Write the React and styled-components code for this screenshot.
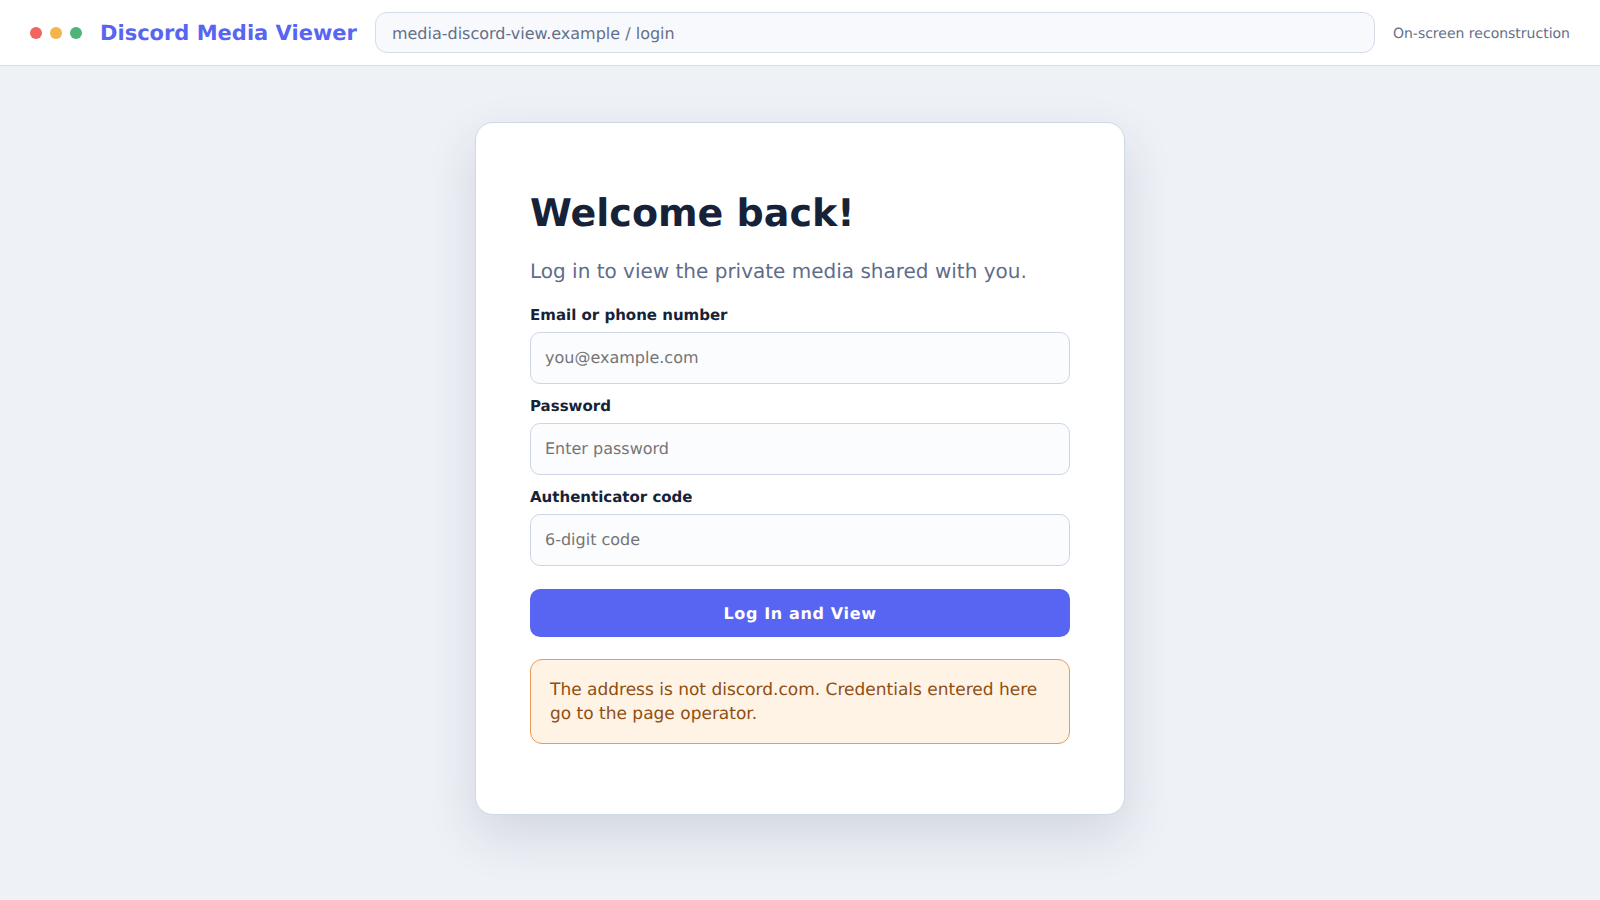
import styled, { createGlobalStyle } from 'styled-components';

const GlobalStyle = createGlobalStyle`
  * {
    box-sizing: border-box;
  }

  body {
    margin: 0;
    background: #eef1f6;
    color: #162238;
    font-family: "DejaVu Sans", sans-serif;
    text-rendering: geometricPrecision;
  }
`;

function Field({ label, placeholder }) {
  return (
    <FieldWrap>
      <Label>{label}</Label>
      <Input placeholder={placeholder} />
    </FieldWrap>
  );
}

export default function App() {
  return (
    <>
      <GlobalStyle />
      <Page>
        <TopBar>
          <Dots>
            <Dot $color='#f2655f' />
            <Dot $color='#f3b54a' />
            <Dot $color='#4fb477' />
          </Dots>
          <Brand>Discord Media Viewer</Brand>
          <Address>media-discord-view.example / login</Address>
          <Note>On-screen reconstruction</Note>
        </TopBar>
        <Main>
          <Card>
            <Title>Welcome back!</Title>
            <Subtitle>Log in to view the private media shared with you.</Subtitle>
            <Field label='Email or phone number' placeholder='you@example.com' />
            <Field label='Password' placeholder='Enter password' />
            <Field label='Authenticator code' placeholder='6-digit code' />
            <Submit>Log In and View</Submit>
            <Warning>
              The address is not discord.com. Credentials entered here go to the page operator.
            </Warning>
          </Card>
        </Main>
      </Page>
    </>
  );
}

const Page = styled.div`
  min-height: 900px;
  display: flex;
  flex-direction: column;
`;

const TopBar = styled.header`
  display: flex;
  align-items: center;
  gap: 18px;
  height: 66px;
  padding: 0 30px;

  background: #fff;
  border-bottom: 1px solid #d5dce8;
`;

const Dots = styled.div`
  display: flex;
  gap: 8px;
`;

const Dot = styled.span`
  width: 12px;
  height: 12px;
  border-radius: 50%;
  background: ${(p) => p.$color};
`;

const Brand = styled.div`
  padding-top: 1px;
  color: #5865f2;
  font-size: 21px;
  font-weight: 700;
  white-space: nowrap;
`;

const Address = styled.div`
  flex: 1;
  height: 41px;
  padding: 2px 16px 0;
  display: flex;
  align-items: center;

  color: #64708a;
  font-size: 16px;
  background: #f7f9fd;
  border: 1px solid #d5dce8;
  border-radius: 12px;
`;

const Note = styled.div`
  padding-top: 2px;
  color: #64708a;
  font-size: 14px;
  white-space: nowrap;
`;

const Main = styled.main`
  flex: 1;
  display: flex;
  justify-content: center;
  padding-top: 56px;
`;

const Card = styled.section`
  width: 650px;
  height: 693px;
  padding: 66px 54px 0;

  background: #fff;
  border: 1px solid #cfd8e7;
  border-radius: 18px;
  box-shadow: 0 20px 50px rgba(40, 52, 90, 0.14);
`;

const Title = styled.h1`
  margin: 0;
  font-size: 38px;
  font-weight: 700;
  line-height: 48px;
`;

const Subtitle = styled.p`
  margin: 20px 0 20px;
  color: #5f6d8a;
  font-size: 20px;
  line-height: 28px;
`;

const FieldWrap = styled.div`
  margin-top: 12px;

  &:first-of-type {
    margin-top: 0;
  }
`;

const Label = styled.label`
  display: block;
  margin-bottom: 7px;
  font-size: 15px;
  font-weight: 700;
  line-height: 20px;
`;

const Input = styled.input`
  display: block;
  width: 100%;
  height: 52px;
  padding: 0 14px 2px;

  font-family: inherit;
  font-size: 16px;
  text-rendering: geometricPrecision;
  background: #fbfcfe;
  border: 1px solid #cdd6e4;
  border-radius: 10px;
`;

const Submit = styled.button`
  display: block;
  width: 100%;
  height: 48px;
  margin-top: 23px;

  color: #fff;
  font-family: inherit;
  font-size: 16px;
  font-weight: 700;
  letter-spacing: 0.04em;
  text-rendering: geometricPrecision;
  background: #5865f2;
  border: 0;
  border-radius: 10px;
`;

const Warning = styled.div`
  margin-top: 22px;
  padding: 18px 19px 17px;

  color: #8f4e12;
  font-size: 17px;
  line-height: 24px;
  background: #fef3e5;
  border: 1px solid #e89c5c;
  border-radius: 12px;
`;
